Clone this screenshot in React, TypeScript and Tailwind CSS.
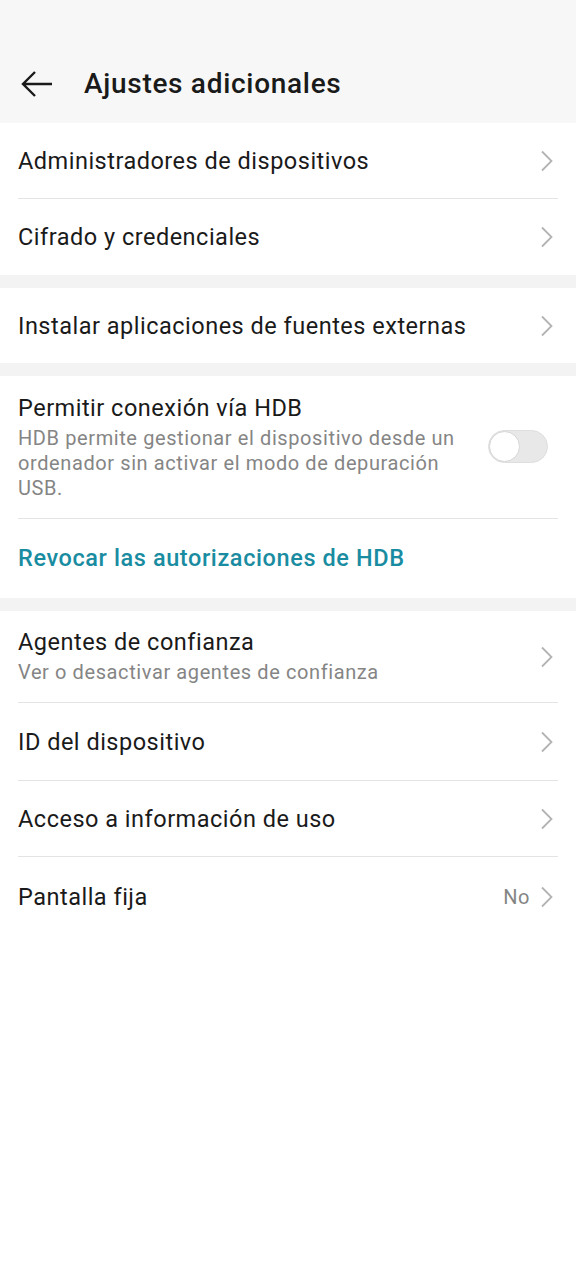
import type { ReactNode } from "react";

const font = { fontFamily: "Roboto, 'Noto Sans', sans-serif" };

function Chevron() {
  return (
    <svg width="14" height="22" viewBox="0 0 14 22" className="shrink-0" aria-hidden>
      <path d="M2 1.5 L11.5 11 L2 20.5" fill="none" stroke="#b3b3b3" strokeWidth="1.8" />
    </svg>
  );
}

function Row({
  title,
  subtitle,
  value,
  divider = true,
  h = "h-[76px]",
}: {
  title: string;
  subtitle?: string;
  value?: string;
  divider?: boolean;
  h?: string;
}) {
  return (
    <div className="px-[18px]">
      <div className={`flex items-center ${h} ${divider ? "border-b border-[#e3e3e3]" : ""}`}>
        <div className="flex-1 min-w-0">
          <div className="text-[23.5px] leading-[28px] tracking-[0.5px] text-[#1a1a1a]">{title}</div>
          {subtitle && (
            <div className="mt-[4px] text-[20px] leading-[25px] tracking-[0.6px] text-[#858585]">{subtitle}</div>
          )}
        </div>
        {value && <span className="mr-[10px] text-[20px] tracking-[0.5px] text-[#858585]">{value}</span>}
        <div className="mr-[4px]">
          <Chevron />
        </div>
      </div>
    </div>
  );
}

function Group({ children }: { children: ReactNode }) {
  return <div className="bg-white">{children}</div>;
}

function Gap() {
  return <div className="h-[13px] bg-[#f3f3f3]" />;
}

export default function App() {
  return (
    <div className="min-h-[1280px] w-[576px] bg-white" style={font}>
      <header className="flex h-[123px] items-end bg-[#f7f7f7] pb-[22px]">
        <svg width="34" height="30" viewBox="0 0 34 30" className="mb-[2px] ml-[20px]" aria-hidden>
          <path d="M32 15 H3 M15 3 L3 15 L15 27" fill="none" stroke="#1a1a1a" strokeWidth="2.4" />
        </svg>
        <h1 className="ml-[30px] text-[28px] font-medium leading-[34px] tracking-[0.7px] text-[#1a1a1a]">
          Ajustes adicionales
        </h1>
      </header>

      <Group>
        <Row title="Administradores de dispositivos" />
        <Row title="Cifrado y credenciales" divider={false} />
      </Group>
      <Gap />
      <Group>
        <Row title="Instalar aplicaciones de fuentes externas" divider={false} h="h-[75px]" />
      </Group>
      <Gap />
      <Group>
        <div className="px-[18px]">
          <div className="flex items-start border-b border-[#e3e3e3] pb-[17px] pt-[18px]">
            <div className="flex-1">
              <div className="text-[23.5px] leading-[28px] tracking-[0.5px] text-[#1a1a1a]">
                Permitir conexión vía HDB
              </div>
              <div className="mt-[4px] w-[450px] text-[20px] leading-[25px] tracking-[0.6px] text-[#858585]">
                HDB permite gestionar el dispositivo desde un ordenador sin activar el modo de depuración USB.
              </div>
            </div>
            <div className="relative mr-[10px] mt-[36px] h-[33px] w-[60px] rounded-full border border-[#dedede] bg-[#e8e8e8]">
              <div className="absolute left-0 top-[0px] h-[31px] w-[31px] rounded-full border border-[#d6d6d6] bg-white" />
            </div>
          </div>
          <div className="flex h-[79px] items-center text-[23.5px] font-medium tracking-[0.6px] text-[#1a8ca1]">
            Revocar las autorizaciones de HDB
          </div>
        </div>
      </Group>
      <Gap />
      <Group>
        <Row title="Agentes de confianza" subtitle="Ver o desactivar agentes de confianza" h="h-[92px]" />
        <Row title="ID del dispositivo" h="h-[78px]" />
        <Row title="Acceso a información de uso" />
        <Row title="Pantalla fija" value="No" divider={false} h="h-[80px]" />
      </Group>
    </div>
  );
}
